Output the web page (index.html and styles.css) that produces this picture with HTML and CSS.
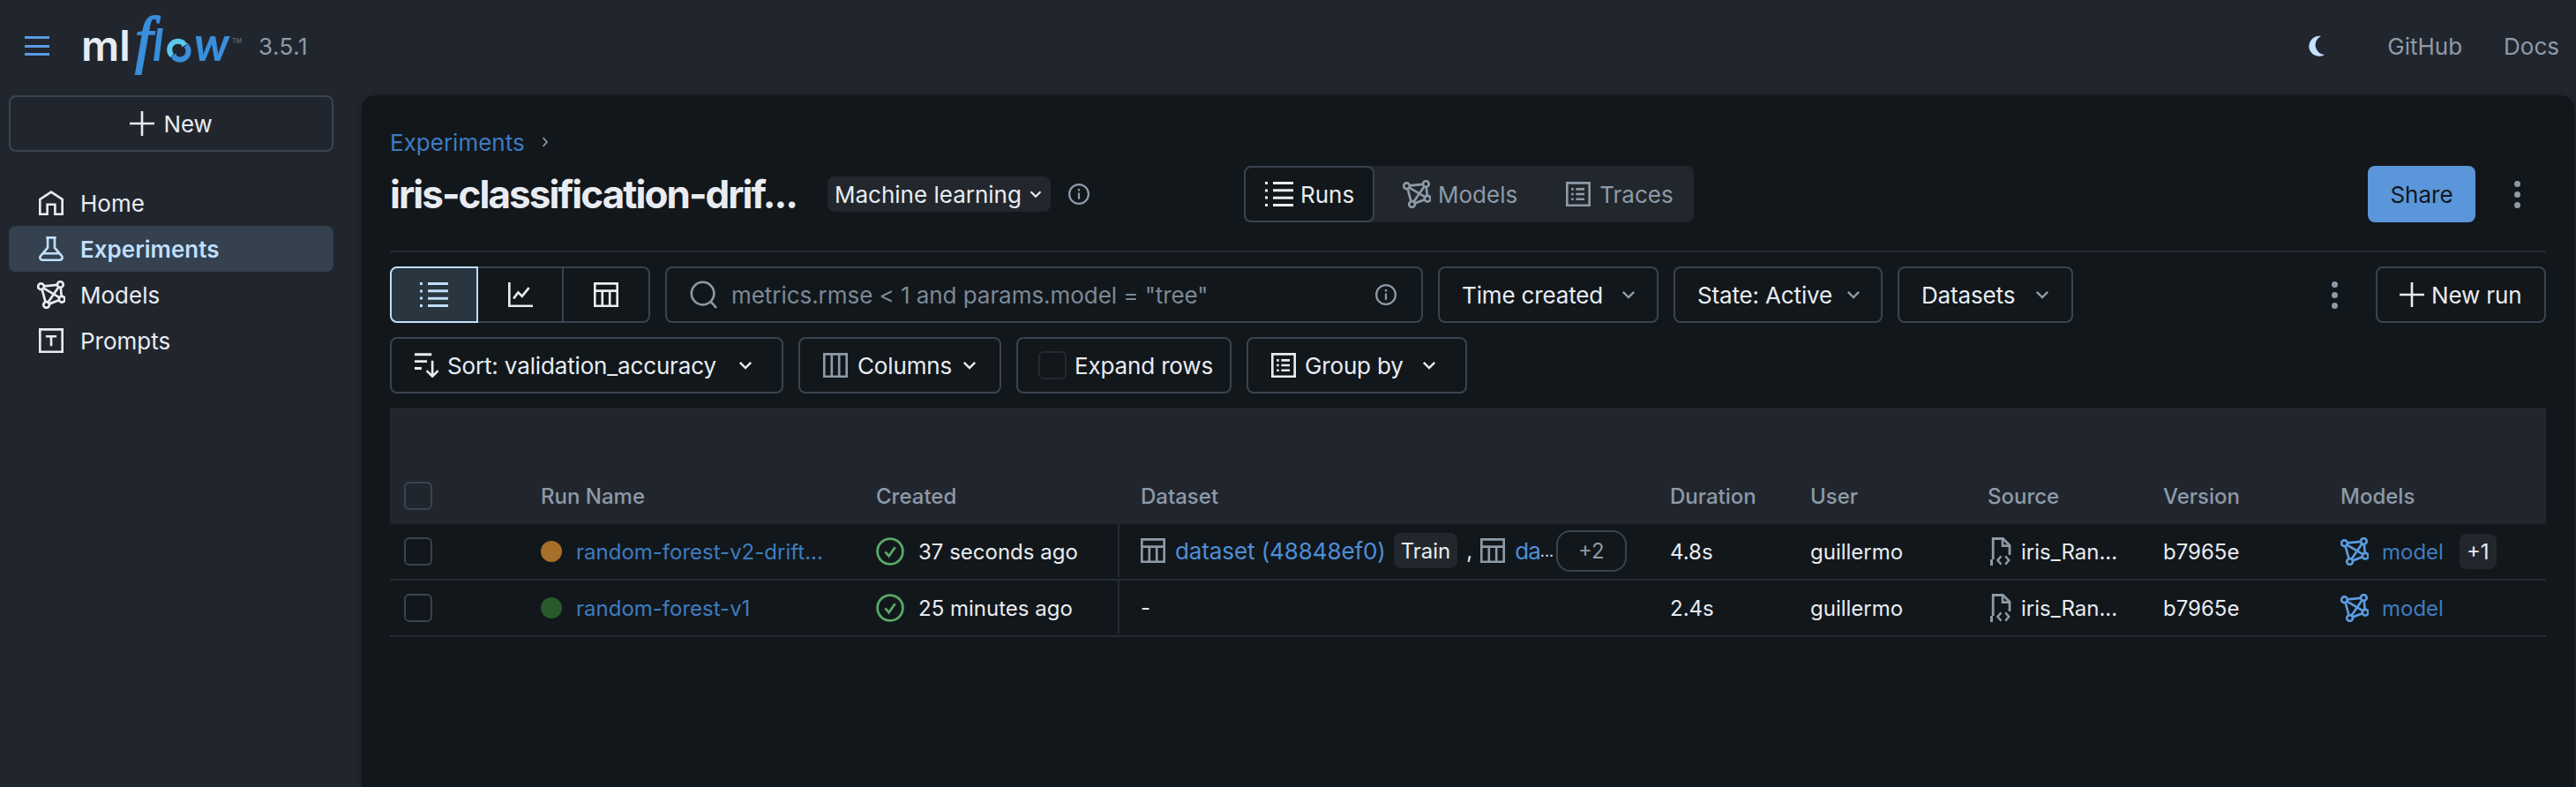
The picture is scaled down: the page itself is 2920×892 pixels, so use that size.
FILE: index.html
```html
<!DOCTYPE html>
<html lang="en">
<head>
<meta charset="utf-8">
<title>MLflow</title>
<link rel="stylesheet" href="styles.css">
</head>
<body>
<svg class="sprite" xmlns="http://www.w3.org/2000/svg">
  <symbol id="i-list" viewBox="0 0 16 16"><path d="M4.5 1.75H16M4.5 5.9H16M4.5 10.1H16M4.5 14.25H16" fill="none" stroke="currentColor" stroke-width="1.5"/><path d="M0 1h1.5v1.5H0zM0 5.2h1.5v1.5H0zM0 9.3h1.5v1.5H0zM0 13.5h1.5V15H0z" fill="currentColor"/></symbol>
  <symbol id="i-models" viewBox="1 .8 14.2 14.2"><g fill="none" stroke="currentColor" stroke-width="1.2"><circle cx="3" cy="3.8" r="1.5"/><circle cx="12.7" cy="2.8" r="1.5"/><circle cx="13.5" cy="10.2" r="1.5"/><circle cx="5.7" cy="13" r="1.5"/><path d="M4.5 3.6 11.200 3M4.300 4.600 12.200 9.300M3.500 5.200 5.200 11.500M11.800 4.100 6.600 11.700M12.900 4.300 13.300 8.700M12 10.700 7.200 12.500"/></g></symbol>
  <symbol id="i-prompt" viewBox="0 0 16 16"><path d="M.75.75h14.5v14.5H.75z" fill="none" stroke="currentColor" stroke-width="1.5"/><path d="M4.5 4.5h7v1.5H8.75v5.5h-1.5V6H4.5z" fill="currentColor"/></symbol>
  <symbol id="i-trace" viewBox="0 0 16 16"><path d="M.75.75h14.5v14.5H.75z" fill="none" stroke="currentColor" stroke-width="1.5"/><path d="M6.5 4.75H12M6.5 8H12M6.5 11.25H12" fill="none" stroke="currentColor" stroke-width="1.5"/><path d="M3.5 4h1.5v1.5H3.5zM3.5 7.25h1.5v1.5H3.5zM3.5 10.5h1.5V12H3.5z" fill="currentColor"/></symbol>
  <symbol id="i-table" viewBox="0 0 16 16"><path d="M.75.75h14.5v14.5H.75zM.75 5.5h14.5M5.6 5.5v9.75M10.4 5.5v9.75" fill="none" stroke="currentColor" stroke-width="1.5"/></symbol>
  <symbol id="i-info" viewBox="0 0 16 16"><circle cx="8" cy="8" r="7.25" fill="none" stroke="currentColor" stroke-width="1.5"/><path d="M7.25 7h1.5v4.75h-1.5zM7.25 4h1.5v1.6h-1.5z" fill="currentColor"/></symbol>
  <symbol id="i-chev" viewBox="0 0 16 16"><path d="M2.5 5.2 8 10.7l5.500-5.500" fill="none" stroke="currentColor" stroke-width="2.200"/></symbol>
  <symbol id="i-plus" viewBox="0 0 16 16"><path d="M8 0v16M0 8h16" fill="none" stroke="currentColor" stroke-width="1.5"/></symbol>
  <symbol id="i-check" viewBox="0 0 16 16"><circle cx="8" cy="8" r="7.2" fill="none" stroke="currentColor" stroke-width="1.4"/><path d="M5.2 8.2 7.3 10.6 10.8 5.6" fill="none" stroke="currentColor" stroke-width="1.4"/></symbol>
  <symbol id="i-source" viewBox="0 0 12 16"><path d="M1.6 12.5V.75H7.2L11 4.5V10" fill="none" stroke="currentColor" stroke-width="1.4"/><path d="M7 .75V4.8h4" fill="none" stroke="currentColor" stroke-width="1.3"/><path d="M.75 12.5V16" fill="none" stroke="currentColor" stroke-width="1.5"/><path d="M6.2 10.7 4.2 13l2 2.3M8.6 10.7l2 2.3-2 2.3" fill="none" stroke="currentColor" stroke-width="1.2"/></symbol>
</svg>

<header class="topbar">
  <button class="hamburger" type="button" aria-label="Menu"><span></span><span></span><span></span></button>
  <svg class="logo" viewBox="0 0 180 64" width="180" height="64" role="img" aria-label="mlflow">
    <text class="logo-ml" x="-3" y="49">ml</text>
    <text class="logo-f" x="58" y="49">f</text>
    <text class="logo-l" x="78" y="49">l</text>
    <path d="M100 43A9.500 9.500 0 0 1 113.500 29.500" fill="none" stroke="#5cc8ee" stroke-width="6"/>
    <path d="M111 25.500 118 29.500 111 33.500z" fill="#5cc8ee"/>
    <path d="M116 31.500A9.500 9.500 0 0 1 102 44.500" fill="none" stroke="#3a8edb" stroke-width="6"/>
    <path d="M105 40.500 98 44.500 105 48.500z" fill="#3a8edb"/>
    <text class="logo-w" x="125" y="49">w</text>
    <text class="logo-tm" x="168" y="29">TM</text>
  </svg>
  <span class="version">3.5.1</span>
  <div class="topbar-right">
    <svg class="moon" viewBox="0 0 20 24" width="20" height="24"><path d="M15 1A11.500 11.500 0 1 0 19 22 11 11 0 0 1 15 1z" fill="currentColor"/></svg>
    <a class="toplink link-github">GitHub</a>
    <a class="toplink">Docs</a>
  </div>
</header>

<div class="shell">
  <aside class="sidebar">
    <button class="btn btn-new" type="button"><svg class="ic ic28"><use href="#i-plus"/></svg>New</button>
    <nav class="nav">
      <a class="nav-item"><svg class="ic ic28" viewBox="0 0 16 16"><path d="M.75 15.250V5.700L8 .9l7.250 4.800v9.550H10.500V9H5.500v6.250z" fill="none" stroke="currentColor" stroke-width="1.500"/></svg>Home</a>
      <a class="nav-item nav-active"><svg class="ic ic28" viewBox="0 0 16 16"><path d="M4.750.75h6.500M5.750.75v6.500L1.200 12.600c-.9 1.200-.2 2.650 1.250 2.650h11.100c1.450 0 2.150-1.450 1.250-2.650L10.250 7.250V.75M3 11h10" fill="none" stroke="currentColor" stroke-width="1.500"/></svg>Experiments</a>
      <a class="nav-item"><svg class="ic ic-wide"><use href="#i-models"/></svg>Models</a>
      <a class="nav-item"><svg class="ic ic28"><use href="#i-prompt"/></svg>Prompts</a>
    </nav>
  </aside>

  <main class="panel">
    <div class="crumbs"><a class="crumb-link">Experiments</a><svg class="crumb-sep" viewBox="0 0 8 12" width="8" height="12"><path d="M1.500 1l4.500 5-4.500 5" fill="none" stroke="currentColor" stroke-width="1.800"/></svg></div>

    <div class="titlebar">
      <div class="title-left">
        <h1 class="title">iris-classification-drif...</h1>
        <span class="tag tag-type">Machine learning<svg class="ic ic16"><use href="#i-chev"/></svg></span>
        <svg class="ic ic24 muted"><use href="#i-info"/></svg>
      </div>
      <div class="tabs">
        <div class="tab tab-on"><svg class="ic ic32"><use href="#i-list"/></svg>Runs</div>
        <div class="tab tab-models"><svg class="ic ic32"><use href="#i-models"/></svg>Models</div>
        <div class="tab tab-traces"><svg class="ic ic28"><use href="#i-trace"/></svg>Traces</div>
      </div>
      <button class="btn-share" type="button">Share</button>
      <div class="kebab kebab-title"><span></span><span></span><span></span></div>
    </div>

    <div class="toolbar">
      <div class="viewswitch">
        <div class="vs vs-on"><svg class="ic ic32"><use href="#i-list"/></svg></div>
        <div class="vs"><svg class="ic ic28" viewBox="0 0 16 16"><path d="M.75 0v15.250H16" fill="none" stroke="currentColor" stroke-width="1.500"/><path d="M3.500 10.500 6.500 6.500 9 9l4.500-5.500" fill="none" stroke="currentColor" stroke-width="1.500"/></svg></div>
        <div class="vs"><svg class="ic ic28"><use href="#i-table"/></svg></div>
      </div>
      <div class="search">
        <svg class="ic ic32 muted" viewBox="0 0 16 16"><circle cx="7.300" cy="7.300" r="6.400" fill="none" stroke="currentColor" stroke-width="1.300"/><path d="M11.800 11.800 15 15.500" fill="none" stroke="currentColor" stroke-width="1.300"/></svg>
        <span class="placeholder">metrics.rmse &lt; 1 and params.model = "tree"</span>
        <svg class="ic ic24 muted"><use href="#i-info"/></svg>
      </div>
      <button class="btn btn-time" type="button">Time created<svg class="ic ic18 muted"><use href="#i-chev"/></svg></button>
      <button class="btn btn-state" type="button">State: Active<svg class="ic ic18 muted"><use href="#i-chev"/></svg></button>
      <button class="btn btn-data" type="button">Datasets<svg class="ic ic18 muted"><use href="#i-chev"/></svg></button>
      <div class="kebab kebab-tool"><span></span><span></span><span></span></div>
      <button class="btn btn-newrun" type="button"><svg class="ic ic28"><use href="#i-plus"/></svg>New run</button>
    </div>

    <div class="toolbar toolbar-2">
      <button class="btn btn-sort" type="button">
        <svg class="ic ic28" viewBox="0 0 16 16"><path d="M0 1h11M0 5.500h8M0 10h4.500" fill="none" stroke="currentColor" stroke-width="1.600"/><path d="M11.500 5v10M7.800 11.500l3.700 3.700 3.700-3.700" fill="none" stroke="currentColor" stroke-width="1.500"/></svg>
        <span class="grow">Sort: validation_accuracy</span><svg class="ic ic18"><use href="#i-chev"/></svg>
      </button>
      <button class="btn btn-cols" type="button">
        <svg class="ic ic28 muted" viewBox="0 0 16 16"><path d="M.75.75h14.500v14.500H.75zM5.600.75v14.500M10.400.75v14.500" fill="none" stroke="currentColor" stroke-width="1.500"/></svg>
        <span class="grow">Columns</span><svg class="ic ic18"><use href="#i-chev"/></svg>
      </button>
      <button class="btn btn-expand" type="button"><span class="checkbox checkbox-dim"></span>Expand rows</button>
      <button class="btn btn-group" type="button">
        <svg class="ic ic28"><use href="#i-trace"/></svg>
        <span class="grow">Group by</span><svg class="ic ic18"><use href="#i-chev"/></svg>
      </button>
    </div>

    <div class="table">
      <div class="thead">
        <div class="cell"><span class="checkbox"></span></div>
        <div class="cell">Run Name</div>
        <div class="cell">Created</div>
        <div class="cell cell-data-h">Dataset</div>
        <div class="cell">Duration</div>
        <div class="cell">User</div>
        <div class="cell">Source</div>
        <div class="cell">Version</div>
        <div class="cell">Models</div>
      </div>

      <div class="row">
        <div class="cell"><span class="checkbox"></span></div>
        <div class="cell cell-gap"><span class="dot dot-orange"></span><a class="link-run">random-forest-v2-drift...</a></div>
        <div class="cell cell-gap"><svg class="ic ic32 ok"><use href="#i-check"/></svg>37 seconds ago</div>
        <div class="cell cell-data">
          <svg class="ic ic28 muted"><use href="#i-table"/></svg>
          <a class="link-data">dataset (48848ef0)</a>
          <span class="tag tag-train">Train</span>
          <span class="comma">,</span>
          <svg class="ic ic28 muted"><use href="#i-table"/></svg>
          <a class="link-data link-cut">da</a>
          <span class="cut-dots">...</span>
          <span class="more">+2</span>
        </div>
        <div class="cell">4.8s</div>
        <div class="cell">guillermo</div>
        <div class="cell cell-src"><svg class="ic ic-src muted"><use href="#i-source"/></svg>iris_Ran...</div>
        <div class="cell">b7965e</div>
        <div class="cell cell-model"><svg class="ic ic32 blue"><use href="#i-models"/></svg><a class="link-run">model</a><span class="tag tag-count">+1</span></div>
      </div>

      <div class="row">
        <div class="cell"><span class="checkbox"></span></div>
        <div class="cell cell-gap"><span class="dot dot-green"></span><a class="link-run">random-forest-v1</a></div>
        <div class="cell cell-gap"><svg class="ic ic32 ok"><use href="#i-check"/></svg>25 minutes ago</div>
        <div class="cell cell-data">-</div>
        <div class="cell">2.4s</div>
        <div class="cell">guillermo</div>
        <div class="cell cell-src"><svg class="ic ic-src muted"><use href="#i-source"/></svg>iris_Ran...</div>
        <div class="cell">b7965e</div>
        <div class="cell cell-model"><svg class="ic ic32 blue"><use href="#i-models"/></svg><a class="link-run">model</a></div>
      </div>
    </div>
  </main>
</div>
</body>
</html>
```
FILE: styles.css
```css
* { box-sizing: border-box; }
html, body { height: 100%; }
body {
  margin: 0;
  background: #21262e;
  color: #e8ecf1;
  font-family: Inter, "Noto Sans", sans-serif;
  font-size: 26px;
  overflow: hidden;
  display: flex;
  flex-direction: column;
}
.sprite { display: none; }
button { font: inherit; color: inherit; background: none; }

/* icons */
.ic { flex: none; display: block; }
.ic16 { width: 16px; height: 16px; }
.ic18 { width: 18px; height: 18px; }
.ic24 { width: 24px; height: 24px; }
.ic28 { width: 28px; height: 28px; }
.ic32 { width: 32px; height: 32px; }
.ic-wide { width: 32px; height: 32px; margin: 0 -2px; }
.ic-src { width: 24px; height: 32px; }
.muted { color: #8d9aa8; }
.ok { color: #5aa866; }
.blue { color: #5a9bdf; }

/* top bar */
.topbar {
  height: 108px;
  flex: none;
  display: flex;
  align-items: center;
  padding: 0 19px 4px 28px;
}
.hamburger {
  width: 28px;
  height: 22px;
  padding: 0;
  border: 0;
  display: flex;
  flex-direction: column;
  justify-content: space-between;
  margin-right: 39px;
}
.hamburger span { display: block; height: 3px; background: #5a9bdf; }
.logo { flex: none; overflow: visible; }
.logo-ml { font: 600 48px Inter, sans-serif; fill: #e8ecf1; }
.logo-f { font: italic 400 72px "Liberation Serif", serif; fill: #3a8edb; stroke: #3a8edb; stroke-width: 1.8px; }
.logo-l { font: italic 700 50px Lato, sans-serif; fill: #3a8edb; }
.logo-w { font: italic 700 54px Lato, sans-serif; fill: #3a8edb; }
.logo-tm { font: 500 7px Inter, sans-serif; fill: #5f7080; }
.version { margin-left: 18px; color: #8d9aa8; letter-spacing: .5px; }
.topbar-right { margin-left: auto; display: flex; align-items: center; }
.moon { color: #c4e1ff; margin-right: 70px; }
.toplink { color: #8d9aa8; }
.link-github { margin-right: 47px; }

/* shell */
.shell { flex: 1; min-height: 0; display: flex; }
.sidebar { width: 410px; flex: none; padding: 0 32px 0 10px; }
.btn {
  height: 64px;
  flex: none;
  display: flex;
  align-items: center;
  border: 2px solid #3a4450;
  border-radius: 8px;
  padding: 0 26px;
  white-space: nowrap;
  letter-spacing: -.15px;
}
.btn-new { width: 368px; justify-content: center; gap: 10px; }
.nav { margin-top: 32px; display: flex; flex-direction: column; }
.nav-item {
  height: 52px;
  display: flex;
  align-items: center;
  gap: 19px;
  padding-left: 34px;
  border-radius: 8px;
}
.nav-active { background: #35414f; color: #bfdffd; font-weight: 600; }

/* main panel */
.panel {
  flex: 1;
  min-width: 0;
  margin-right: 2px;
  padding: 33px 32px 0;
  background: #12171b;
  border-radius: 16px 16px 0 0;
  box-shadow: 0 0 6px rgba(0,0,0,.25);
}
.crumbs { height: 40px; display: flex; align-items: center; gap: 19px; margin-bottom: 7px; }
.crumb-link { color: #3f7cc0; }
.crumb-sep { color: #8d9aa8; }
.titlebar {
  height: 98px;
  padding-bottom: 32px;
  border-bottom: 2px solid #252b32;
  display: flex;
  align-items: center;
}
.title-left { width: 968px; flex: none; display: flex; align-items: center; }
.title { margin: 0; width: 496px; font-size: 44px; font-weight: 700; letter-spacing: -1.95px; white-space: nowrap; }
.tag { display: inline-flex; align-items: center; height: 40px; background: #22272d; border-radius: 8px; }
.tag-type { padding: 0 9px 0 8px; gap: 8px; margin-right: 20px; }
.tabs { display: flex; height: 64px; background: #22272d; border-radius: 8px; color: #8d9aa8; }
.tab { display: flex; align-items: center; gap: 8px; }
.tab-on {
  padding: 0 22px;
  width: 148px;
  color: #e8ecf1;
  background: #12171b;
  border: 2px solid #3a4450;
  border-radius: 8px;
}
.tab-models { padding: 0 25px 0 32px; }
.tab-traces { padding: 0 23px 0 30px; gap: 10px; }
.btn-share {
  margin-left: auto;
  margin-right: 14px;
  width: 122px;
  height: 64px;
  border: 0;
  border-radius: 8px;
  background: #5a96d9;
  color: #12171b;
}
.kebab { width: 66px; flex: none; display: flex; flex-direction: column; align-items: center; justify-content: center; gap: 5px; }
.kebab span { width: 7px; height: 7px; border-radius: 50%; background: #8d9aa8; }

/* toolbars */
.toolbar { height: 64px; margin-top: 16px; display: flex; gap: 17px; }
.viewswitch { display: flex; width: 295px; flex: none; }
.vs {
  flex: 1;
  display: flex;
  align-items: center;
  justify-content: center;
  border: 2px solid #3a4450;
  margin-left: -2px;
}
.vs:first-child { margin-left: 0; border-radius: 8px 0 0 8px; }
.vs:last-child { border-radius: 0 8px 8px 0; }
.vs-on { background: #29353f; border-color: #bfdffd; color: #bfdffd; position: relative; }
.search {
  width: 859px;
  flex: none;
  display: flex;
  align-items: center;
  border: 2px solid #3a4450;
  border-radius: 8px;
  padding: 0 28px 0 26px;
  gap: 15px;
}
.placeholder { flex: 1; color: #7c8997; white-space: nowrap; letter-spacing: -.05px; }
.btn-time { width: 250px; justify-content: space-between; padding-right: 23px; padding-left: 25px; }
.btn-state { width: 237px; justify-content: space-between; padding-right: 22px; padding-left: 25px; }
.btn-data { width: 199px; justify-content: space-between; padding-right: 24px; padding-left: 25px; }
.kebab-tool { margin-left: 249px; width: 60px; }
.btn-newrun { width: 193px; gap: 8px; padding-left: 25px; }
.btn-sort { width: 446px; gap: 9px; padding-right: 32px; }
.btn-cols { width: 230px; gap: 11px; padding-right: 31px; }
.btn-expand { width: 244px; gap: 9px; padding-left: 23px; }
.btn-group { width: 250px; gap: 10px; padding-right: 32px; }
.grow { flex: 1; text-align: left; }
.checkbox {
  display: block;
  width: 32px;
  height: 32px;
  flex: none;
  border: 2px solid #3a4450;
  border-radius: 6px;
}
.checkbox-dim { border-color: #232a31; }

/* table */
.table { margin-top: 16px; font-size: 24px; }
.thead, .row {
  display: grid;
  grid-template-columns: 171px 380px 274px 626px 159px 201px 199px 201px 233px;
}
.thead {
  height: 132px;
  padding-top: 68px;
  background: #21262e;
  color: #8d9aa8;
  font-weight: 500;
}
.row { height: 64px; border-bottom: 2px solid #252b32; }
.cell { display: flex; align-items: center; white-space: nowrap; min-width: 0; }
.thead .cell:first-child, .row .cell:first-child { padding-left: 16px; }
.cell-data-h { padding-left: 26px; }
.cell-data {
  padding-left: 24px;
  border-left: 2px solid #252b32;
  margin-bottom: 2px;
}
.cell-gap { gap: 16px; }
.dot { width: 24px; height: 24px; border-radius: 50%; flex: none; }
.dot-orange { background: #a66f2a; }
.dot-green { background: #285a2d; }
.link-run { color: #3f7cc0; }
.link-data { color: #4f8fd8; font-size: 26px; margin-left: 11px; letter-spacing: -.1px; }
.link-cut { flex: none; letter-spacing: -1px; }
.cut-dots { color: #e8ecf1; font-size: 18px; width: 18px; flex: none; }
.tag-train { padding: 0 8px; margin-left: 9px; }
.comma { margin: 0 9px 0 10px; }
.more {
  width: 80px;
  height: 47px;
  display: flex;
  align-items: center;
  justify-content: center;
  border: 2px solid #3a4450;
  border-radius: 16px;
  color: #8d9aa8;
}
.cell-src { gap: 11px; padding-left: 3px; }
.cell-model { gap: 15px; }
.tag-count { padding: 0 8px; margin-left: 3px; }
```
